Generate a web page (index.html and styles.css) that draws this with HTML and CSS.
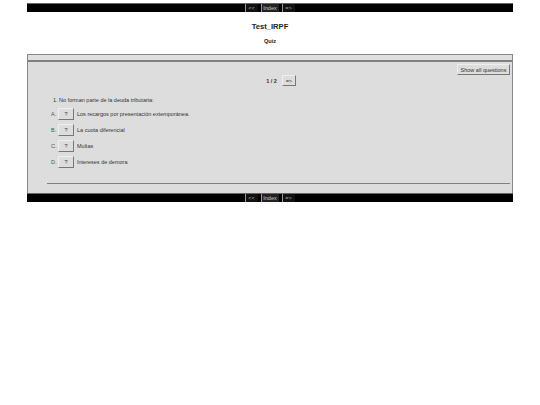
FILE: index.html
```html
<!DOCTYPE html>
<html lang="es">
<head>
<meta charset="utf-8">
<title>Test_IRPF</title>
<link rel="stylesheet" href="styles.css">
</head>
<body>
<div class="page">
  <nav class="nav nav-top">
    <a class="nav-link nav-prev">&lt;&lt;</a><a class="nav-link nav-index">Index</a><a class="nav-link nav-next">=&gt;</a>
  </nav>
  <h1 class="title">Test_IRPF</h1>
  <h2 class="subtitle">Quiz</h2>
  <main class="panel">
    <div class="panel-head"></div>
    <div class="panel-body">
      <div class="show-row"><button class="btn btn-show">Show all questions</button></div>
      <div class="pager"><b>1 / 2</b><button class="btn btn-next">=&gt;</button></div>
      <p class="question">1. No forman parte de la deuda tributaria:</p>
      <div class="answer"><span class="letter">A.</span><button class="btn btn-q">?</button><span>Los recargos por presentación extemporánea.</span></div>
      <div class="answer"><span class="letter">B.</span><button class="btn btn-q">?</button><span>La cuota diferencial</span></div>
      <div class="answer"><span class="letter">C.</span><button class="btn btn-q">?</button><span>Multas</span></div>
      <div class="answer"><span class="letter">D.</span><button class="btn btn-q">?</button><span>Intereses de demora</span></div>
      <hr class="rule">
    </div>
  </main>
  <nav class="nav nav-bottom">
    <a class="nav-link nav-prev">&lt;&lt;</a><a class="nav-link nav-index">Index</a><a class="nav-link nav-next">=&gt;</a>
  </nav>
</div>
</body>
</html>
```
FILE: styles.css
```css
* { box-sizing: border-box; }
html, body { margin: 0; padding: 0; background: #fff; }
body { font-family: "Liberation Sans", Arial, sans-serif; font-size: 5.5px; color: #333; }
.page { width: 486px; margin: 3px 0 0 27px; }
.nav { height: 9px; background: #000; border-top: 1px solid #666; display: flex; justify-content: center; padding-right: 1px; }
.nav-link { color: #aaa; font-size: 5.5px; line-height: 8px; border-left: 1px solid #999; text-align: center; background: #111; }
.nav-prev { width: 13px; margin-right: 3px; }
.nav-index { width: 18px; margin-right: 3px; background: #222; color: #ccc; }
.nav-next { width: 13px; }
.title { margin: 0; padding-top: 10px; height: 24px; text-align: center; font-size: 7.6px; line-height: 10px; font-weight: bold; color: #222; }
.subtitle { margin: 0; height: 18px; text-align: center; font-size: 5.6px; line-height: 8px; font-weight: bold; color: #222; padding-top: 1px; }
.panel { border: 1px solid #888; border-bottom: 0; background: #ddd; }
.panel-head { height: 7px; background: #e0e0e0; border-bottom: 2px solid #808080; }
.panel-body { height: 131px; padding: 2px 2px 0 19px; }
.btn { font-family: inherit; font-size: 5.5px; color: #333; background: #ddd; border: 0; border-top: 1px solid #eee; border-left: 1px solid #eee; border-right: 1px solid #777; border-bottom: 1px solid #777; padding: 0; margin: 0; }
.show-row { display: flex; justify-content: flex-end; height: 11px; }
.btn-show { width: 53px; height: 11px; }
.pager { display: flex; justify-content: center; align-items: center; gap: 5px; height: 11px; padding-left: 5px; }
.btn-next { width: 14px; height: 11px; }
.question { margin: 11px 0 0; line-height: 7px; padding-left: 6px; }
.answer { display: flex; align-items: center; height: 12px; margin-top: 4px; padding-left: 4px; }
.letter { width: 7px; color: #555; }
.btn-q { width: 16px; height: 12px; margin-right: 3px; }
.rule { margin: 15px 0 0; border: 0; border-top: 1px solid #808080; }
```
